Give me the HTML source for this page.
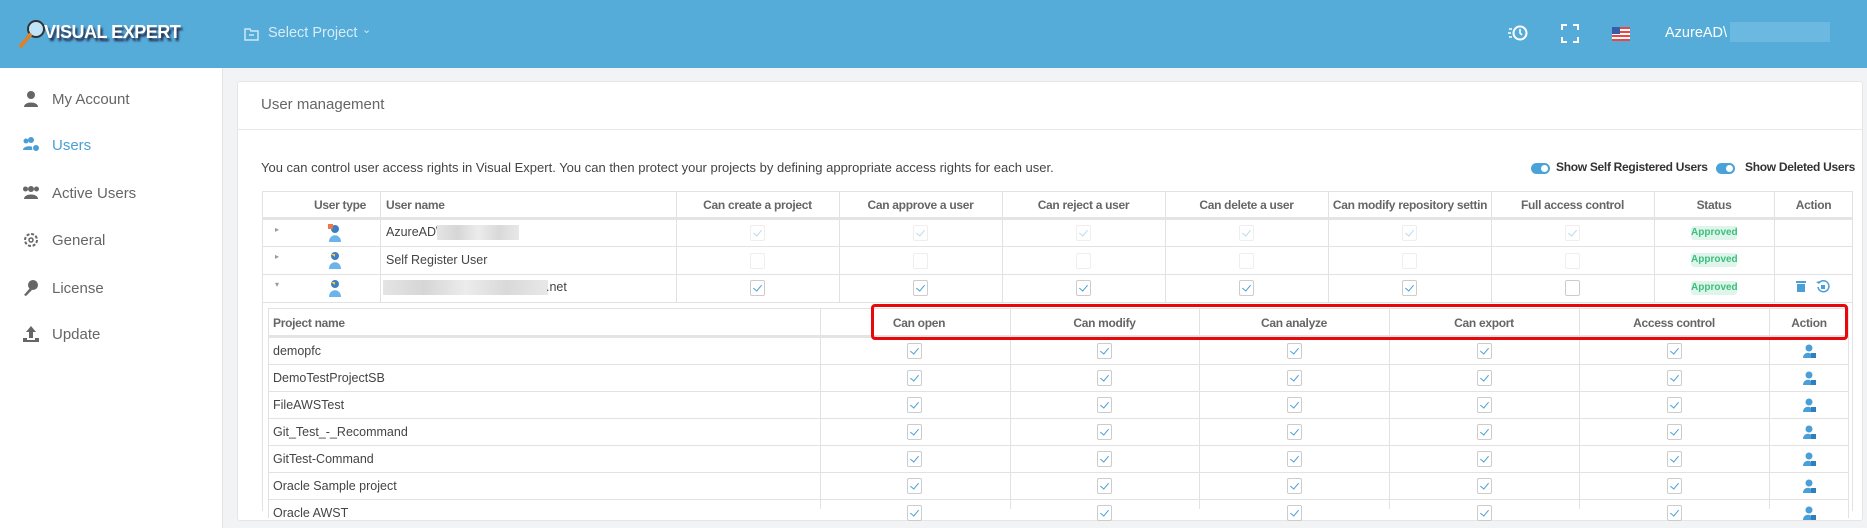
<!DOCTYPE html>
<html><head><meta charset="utf-8"><style>
*{box-sizing:border-box;margin:0;padding:0}
body{width:1867px;height:509px;overflow:hidden;background:#f2f3f5;font-family:"Liberation Sans",sans-serif;color:#555;position:relative}
.hdr{position:absolute;left:0;top:0;width:1867px;height:68px;background:#55acd9}
.abs{position:absolute}
.side{position:absolute;left:0;top:68px;width:223px;height:460px;background:#fff;border-right:1px solid #e3e3e3}
.si{position:absolute;left:52px;font-size:15px;color:#666}
.ic{position:absolute;left:22px;width:18px;height:18px}
.card{position:absolute;left:237px;top:81px;width:1626px;height:440px;background:#fff;border:1px solid #e6e6e6;border-radius:3px}
.cb{position:absolute;width:15px;height:16px;border:1px solid #ccc;border-radius:2px;background:#fff}
.cb.c::after{content:"";position:absolute;left:4px;top:2px;width:4px;height:7px;border-right:1.5px solid #4a9fd6;border-bottom:1.5px solid #4a9fd6;transform:rotate(40deg)}
.cb.l{border-color:#eee}.cb.l::after{border-color:#b9daf0}
.t{position:absolute;font-size:12.5px;color:#444;white-space:nowrap}
.th{position:absolute;font-size:12px;letter-spacing:-0.3px;font-weight:bold;color:#666;white-space:nowrap;text-align:center}
.hl{position:absolute;height:1px;background:#e2e2e2}
.vl{position:absolute;width:1px;background:#e2e2e2}
.ap{position:absolute;left:1691px;width:46px;height:14px;background:#dff4ea;color:#3cbf7c;font-size:10px;font-weight:bold;text-align:center;line-height:14px;border-radius:3px}
.tg{position:absolute;width:19px;height:11px;border-radius:6px;background:#4aa3d8}
.tg::after{content:"";position:absolute;right:2px;top:2px;width:7px;height:7px;border-radius:50%;background:#fff}
.blur{position:absolute;height:15px;background:linear-gradient(90deg,#e4e4e4,#d6d6d6,#ececec,#d9d9d9,#e8e8e8)}
.tb{position:absolute;font-size:12px;letter-spacing:-0.3px;font-weight:bold;color:#333;white-space:nowrap}
</style></head><body>
<div class="hdr">
 <svg class="abs" style="left:18px;top:18px" width="30" height="32"><circle cx="18" cy="11" r="8" fill="#bfe3f7" stroke="#333" stroke-width="2"/><line x1="12" y1="17" x2="3" y2="28" stroke="#d9822b" stroke-width="4" stroke-linecap="round"/></svg>
 <div class="abs" style="left:44px;top:22px;font-size:18px;font-weight:bold;color:#fff;text-shadow:2px 3px 2px #224;letter-spacing:-0.5px">VISUAL EXPERT</div>
 <svg class="abs" style="left:244px;top:27px" width="15" height="14"><path d="M1 2h5l1 2h7v9H1z" fill="none" stroke="#cfe7f5" stroke-width="1.5"/><line x1="5" y1="8" x2="10" y2="8" stroke="#cfe7f5" stroke-width="1.5"/></svg>
 <div class="abs" style="left:268px;top:25px;font-size:14.5px;color:#d8ecf7">Select Project</div>
 <div class="abs" style="left:362px;top:23px;font-size:11px;color:#d8ecf7">&#8964;</div>
 <svg class="abs" style="left:1508px;top:23px" width="20" height="20"><circle cx="12" cy="10" r="6.5" fill="none" stroke="#fff" stroke-width="2"/><path d="M12 6v4l2 2" stroke="#fff" stroke-width="1.6" fill="none"/><path d="M1 6h3M0 10h3M1 14h3" stroke="#fff" stroke-width="1.6"/></svg>
 <svg class="abs" style="left:1561px;top:24px" width="18" height="19"><path d="M1 6V1h5M12 1h5v5M17 13v5h-5M6 18H1v-5" stroke="#fff" stroke-width="2" fill="none"/></svg>
 <div class="abs" style="left:1612px;top:27px;width:18px;height:14px;background:repeating-linear-gradient(#e44 0 2px,#fff 2px 4px)"><div style="width:8px;height:7px;background:#3b5aa8"></div></div>
 <div class="abs" style="left:1665px;top:25px;font-size:14.5px;color:#fff">AzureAD\</div>
 <div class="abs" style="left:1730px;top:22px;width:100px;height:20px;background:#6bb8e0"></div>
</div>
<div class="side">
 <svg class="ic" style="top:22px" viewBox="0 0 18 18"><circle cx="9" cy="5" r="4" fill="#666"/><path d="M2 17c0-6 14-6 14 0z" fill="#666"/></svg><div class="si" style="top:23px">My Account</div>
 <svg class="ic" style="top:68px" viewBox="0 0 18 18"><circle cx="4" cy="5" r="2.5" fill="#4a9fd6"/><circle cx="9" cy="4" r="3" fill="#4a9fd6"/><path d="M1 14c0-5 12-5 12 0z" fill="#4a9fd6"/><circle cx="14" cy="12" r="3.5" fill="#4a9fd6" stroke="#fff"/></svg><div class="si" style="top:69px;color:#4a9fd6">Users</div>
 <svg class="ic" style="top:116px" viewBox="0 0 18 18"><circle cx="3.5" cy="5" r="2.5" fill="#666"/><circle cx="14.5" cy="5" r="2.5" fill="#666"/><circle cx="9" cy="5" r="3" fill="#666"/><path d="M2 15c0-6 14-6 14 0z" fill="#666"/></svg><div class="si" style="top:117px">Active Users</div>
 <svg class="ic" style="top:163px" viewBox="0 0 18 18"><circle cx="9" cy="9" r="6" fill="none" stroke="#666" stroke-width="2" stroke-dasharray="3 1.7"/><circle cx="9" cy="9" r="2" fill="none" stroke="#666" stroke-width="1.5"/></svg><div class="si" style="top:164px">General</div>
 <svg class="ic" style="top:211px" viewBox="0 0 18 18"><circle cx="11" cy="6" r="5" fill="#666"/><path d="M8 9L2 16l2 1 6-6z" fill="#666"/></svg><div class="si" style="top:212px">License</div>
 <svg class="ic" style="top:257px" viewBox="0 0 18 18"><path d="M9 1l5 6h-3v6H7V7H4z" fill="#666"/><path d="M1 13h4v2h8v-2h4v4H1z" fill="#666"/></svg><div class="si" style="top:258px">Update</div>
</div>
<div class="card"></div>
<div class="abs" style="left:261px;top:96px;font-size:15px;color:#666">User management</div>
<div class="hl" style="left:238px;top:129px;width:1624px;background:#e8e8e8"></div>
<div class="t" style="left:261px;top:160px;font-size:13px">You can control user access rights in Visual Expert. You can then protect your projects by defining appropriate access rights for each user.</div>
<div class="tg" style="left:1531px;top:163px"></div><div class="tb" style="left:1556px;top:160px">Show Self Registered Users</div>
<div class="tg" style="left:1716px;top:163px"></div><div class="tb" style="left:1745px;top:160px">Show Deleted Users</div>

<div class="abs" style="left:262px;top:191px;width:1591px;height:320px;border:1px solid #e2e2e2;border-bottom:none"></div>
<div class="hl" style="left:262px;top:217px;width:1591px;height:3px;background:#e4e4e4"></div>
<div class="hl" style="left:262px;top:246px;width:1591px"></div>
<div class="hl" style="left:262px;top:274px;width:1591px"></div>
<div class="hl" style="left:262px;top:302px;width:1591px"></div>
<div class="vl" style="left:380px;top:191px;height:111px"></div>
<div class="vl" style="left:676px;top:191px;height:111px"></div>
<div class="vl" style="left:839px;top:191px;height:111px"></div>
<div class="vl" style="left:1002px;top:191px;height:111px"></div>
<div class="vl" style="left:1165px;top:191px;height:111px"></div>
<div class="vl" style="left:1328px;top:191px;height:111px"></div>
<div class="vl" style="left:1491px;top:191px;height:111px"></div>
<div class="vl" style="left:1654px;top:191px;height:111px"></div>
<div class="vl" style="left:1774px;top:191px;height:111px"></div>
<div class="th" style="left:300px;top:198px;width:80px">User type</div>
<div class="th" style="left:386px;top:198px;text-align:left">User name</div>
<div class="th" style="left:676px;top:198px;width:163px">Can create a project</div>
<div class="th" style="left:839px;top:198px;width:163px">Can approve a user</div>
<div class="th" style="left:1002px;top:198px;width:163px">Can reject a user</div>
<div class="th" style="left:1165px;top:198px;width:163px">Can delete a user</div>
<div class="th" style="left:1330px;top:198px;width:160px;overflow:hidden">Can modify repository settin</div>
<div class="th" style="left:1491px;top:198px;width:163px">Full access control</div>
<div class="th" style="left:1654px;top:198px;width:120px">Status</div>
<div class="th" style="left:1774px;top:198px;width:79px">Action</div>

<div class="t" style="left:275px;top:225px;font-size:8px;color:#999">&#9656;</div>
<div class="t" style="left:275px;top:252px;font-size:8px;color:#999">&#9656;</div>
<div class="t" style="left:275px;top:280px;font-size:8px;color:#999">&#9662;</div>
<svg class="abs" style="left:328px;top:224px" width="14" height="18"><circle cx="7" cy="5" r="4" fill="#3d7fc4"/><path d="M1 18c0-9 12-9 12 0z" fill="#6bb3ea"/><rect x="0" y="0" width="5" height="5" fill="#e74"/></svg>
<svg class="abs" style="left:328px;top:251px" width="14" height="18"><circle cx="7" cy="5" r="4" fill="#3d7fc4"/><path d="M1 18c0-9 12-9 12 0z" fill="#6bb3ea"/><path d="M3 3h4v3z" fill="#fc3"/></svg>
<svg class="abs" style="left:328px;top:279px" width="14" height="18"><circle cx="7" cy="5" r="4" fill="#3d7fc4"/><path d="M1 18c0-9 12-9 12 0z" fill="#6bb3ea"/><path d="M3 3h4v3z" fill="#fc3"/></svg>
<div class="t" style="left:386px;top:225px">AzureAD\</div><div class="blur" style="left:437px;top:225px;width:82px"></div>
<div class="t" style="left:386px;top:253px">Self Register User</div>
<div class="blur" style="left:383px;top:280px;width:165px"></div><div class="t" style="left:546px;top:280px">.net</div>

<div class="cb l c" style="left:750px;top:225px"></div><div class="cb l c" style="left:913px;top:225px"></div><div class="cb l c" style="left:1076px;top:225px"></div><div class="cb l c" style="left:1239px;top:225px"></div><div class="cb l c" style="left:1402px;top:225px"></div><div class="cb l c" style="left:1565px;top:225px"></div>
<div class="cb l" style="left:750px;top:253px"></div><div class="cb l" style="left:913px;top:253px"></div><div class="cb l" style="left:1076px;top:253px"></div><div class="cb l" style="left:1239px;top:253px"></div><div class="cb l" style="left:1402px;top:253px"></div><div class="cb l" style="left:1565px;top:253px"></div>
<div class="cb c" style="left:750px;top:280px"></div><div class="cb c" style="left:913px;top:280px"></div><div class="cb c" style="left:1076px;top:280px"></div><div class="cb c" style="left:1239px;top:280px"></div><div class="cb c" style="left:1402px;top:280px"></div><div class="cb" style="left:1565px;top:280px"></div>
<div class="ap" style="top:226px">Approved</div><div class="ap" style="top:253px">Approved</div><div class="ap" style="top:281px">Approved</div>
<svg class="abs" style="left:1796px;top:280px" width="10" height="12"><rect x="0" y="1" width="10" height="2" fill="#4a9fd6"/><rect x="1" y="4" width="8" height="8" fill="#4a9fd6"/></svg>
<svg class="abs" style="left:1816px;top:279px" width="14" height="14"><path d="M3 4A5.5 5.5 0 1 1 2 8" fill="none" stroke="#4a9fd6" stroke-width="1.5"/><path d="M0 3l3 2 1-3" fill="#4a9fd6"/><rect x="5" y="6" width="4" height="4" fill="#4a9fd6"/></svg>

<div class="abs" style="left:268px;top:308px;width:1581px;height:210px;border:1px solid #e2e2e2;border-bottom:none"></div>
<div class="hl" style="left:268px;top:335px;width:1581px;height:3px;background:#e4e4e4"></div>
<div class="hl" style="left:268px;top:364px;width:1581px"></div>
<div class="hl" style="left:268px;top:391px;width:1581px"></div>
<div class="hl" style="left:268px;top:418px;width:1581px"></div>
<div class="hl" style="left:268px;top:445px;width:1581px"></div>
<div class="hl" style="left:268px;top:472px;width:1581px"></div>
<div class="hl" style="left:268px;top:499px;width:1581px"></div>
<div class="vl" style="left:820px;top:308px;height:201px"></div>
<div class="vl" style="left:1010px;top:308px;height:201px"></div>
<div class="vl" style="left:1199px;top:308px;height:201px"></div>
<div class="vl" style="left:1389px;top:308px;height:201px"></div>
<div class="vl" style="left:1579px;top:308px;height:201px"></div>
<div class="vl" style="left:1769px;top:308px;height:201px"></div>
<div class="th" style="left:273px;top:316px;text-align:left">Project name</div>
<div class="th" style="left:820px;top:316px;width:190px;padding-left:8px">Can open</div>
<div class="th" style="left:1010px;top:316px;width:189px">Can modify</div>
<div class="th" style="left:1199px;top:316px;width:190px">Can analyze</div>
<div class="th" style="left:1389px;top:316px;width:190px">Can export</div>
<div class="th" style="left:1579px;top:316px;width:190px">Access control</div>
<div class="th" style="left:1769px;top:316px;width:80px">Action</div>
<div class="abs" style="left:871px;top:304px;width:977px;height:36px;border:3px solid #e8080c;border-radius:4px"></div>

<div class="t" style="left:273px;top:344px">demopfc</div>
<div class="t" style="left:273px;top:371px">DemoTestProjectSB</div>
<div class="t" style="left:273px;top:398px">FileAWSTest</div>
<div class="t" style="left:273px;top:425px">Git_Test_-_Recommand</div>
<div class="t" style="left:273px;top:452px">GitTest-Command</div>
<div class="t" style="left:273px;top:479px">Oracle Sample project</div>
<div class="t" style="left:273px;top:506px">Oracle AWST</div>

<div id="rows"></div>
<script>
var ys=[343,370,397,424,451,478,505],xs=[907,1097,1287,1477,1667],h="";
ys.forEach(function(y){xs.forEach(function(x){h+='<div class="cb c" style="left:'+x+'px;top:'+y+'px"></div>'});
h+='<svg class="abs" style="left:1803px;top:'+(y+1)+'px" width="13" height="14"><circle cx="6" cy="4" r="3.5" fill="#4a9fd6"/><path d="M0 14c0-7 10-7 10 0z" fill="#4a9fd6"/><rect x="8" y="9" width="5" height="5" fill="#2f7fbf"/></svg>';});
document.getElementById('rows').innerHTML=h;
</script>
</body></html>
